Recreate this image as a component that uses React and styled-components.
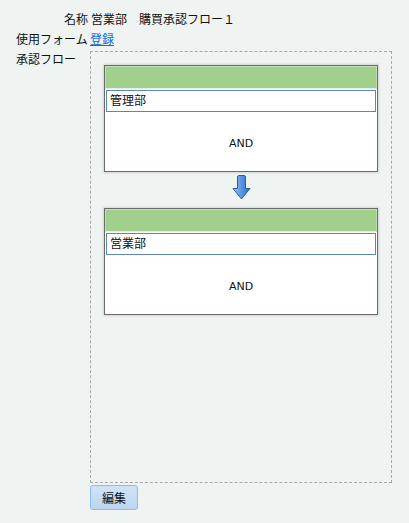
import React from 'react';
import styled, { createGlobalStyle } from 'styled-components';

const GlobalStyle = createGlobalStyle`
    html, body {
        margin: 0;
        padding: 0;
        background-color: #eff4f2;
    }
    body {
        font-family: "Liberation Sans", "Noto Sans CJK JP", sans-serif;
        font-size: 12px;
        color: #111;
    }
`;

const Page = styled.div`
    padding: 10px 0 0 16px;
    width: 409px;
    height: 523px;
    box-sizing: border-box;
`;

const Row = styled.div`
    display: flex;
    align-items: flex-start;
    line-height: 20px;
`;

const Label = styled.div`
    width: 72px;
    flex-shrink: 0;
    text-align: ${props => props.right ? 'right' : 'left'};
    margin-right: ${props => props.right ? '3px' : '2px'};
`;

const Value = styled.div`
    white-space: nowrap;
`;

const Link = styled.a`
    color: #0a6fd6;
    text-decoration: underline;
    cursor: pointer;
`;

const FlowArea = styled.div`
    margin-top: 1px;
    width: 302px;
    height: 432px;
    box-sizing: border-box;
    border: 1px dashed #a8a8a8;
    padding: 13px;
    display: flex;
    flex-direction: column;
    align-items: center;
`;

const Card = styled.div`
    width: 274px;
    flex-shrink: 0;
    box-sizing: border-box;
    border: 1px solid #6a6a6a;
    background-color: #fff;
    box-shadow: 0 0 2px 1px rgba(0, 0, 0, 0.12);
`;

const CardHeader = styled.div`
    height: 23px;
    box-sizing: border-box;
    background-color: #a0d08c;
    border: 1px solid #c2e0b4;
    border-bottom: 1px solid #e8ece8;
`;

const NameBox = styled.div`
    margin: 1px 1px 0;
    height: 22px;
    box-sizing: border-box;
    border: 1px solid #5b87b8;
    padding: 0 3px;
    line-height: 20px;
    overflow: hidden;
`;

const Condition = styled.div`
    height: 59px;
    display: flex;
    align-items: center;
    justify-content: center;
    font-family: "DejaVu Sans", "Liberation Sans", sans-serif;
    font-size: 11px;
    padding-top: 4px;
    box-sizing: border-box;
`;

const ArrowWrap = styled.div`
    margin: 3px 0 8px;
    height: 25px;
    flex-shrink: 0;
    display: flex;
    justify-content: center;
`;

const EditButton = styled.button`
    margin-top: 2px;
    width: 48px;
    height: 25px;
    border: 1px solid #8ebcea;
    border-radius: 3px;
    background: linear-gradient(#cfe3f7, #bcd6f1);
    font-family: "Noto Sans CJK JP", sans-serif;
    font-size: 12px;
    color: #111;
    padding: 0;
    cursor: pointer;
`;

const DownArrow = () => (
    <svg width="19" height="25" viewBox="0 0 19 25">
        <defs>
            <linearGradient id="arrowFill" x1="0" y1="0" x2="1" y2="0">
                <stop offset="0" stopColor="#9cc8f5" />
                <stop offset="0.45" stopColor="#5b9be6" />
                <stop offset="1" stopColor="#2f6fcf" />
            </linearGradient>
        </defs>
        <path
            d="M5.5 2 Q5.5 0.5 7 0.5 L12 0.5 Q13.5 0.5 13.5 2 L13.5 13.5 L18 13.5 L9.5 24 L1 13.5 L5.5 13.5 Z"
            fill="url(#arrowFill)"
            stroke="#2b5d9e"
            strokeWidth="1"
            strokeLinejoin="round"
        />
    </svg>
);

const StepCard = ({ name }) => (
    <Card>
        <CardHeader />
        <NameBox>{name}</NameBox>
        <Condition>AND</Condition>
    </Card>
);

const steps = ['管理部', '営業部'];

const App = () => {
    return (
        <>
            <GlobalStyle />
            <Page>
                <Row>
                    <Label right>名称</Label>
                    <Value>営業部　購買承認フロー１</Value>
                </Row>
                <Row>
                    <Label>使用フォーム</Label>
                    <Value><Link>登録</Link></Value>
                </Row>
                <Row>
                    <Label>承認フロー</Label>
                    <div>
                        <FlowArea>
                            {steps.map((step, i) => (
                                <React.Fragment key={'step-' + step}>
                                    {i > 0 ? <ArrowWrap><DownArrow /></ArrowWrap> : null}
                                    <StepCard name={step} />
                                </React.Fragment>
                            ))}
                        </FlowArea>
                        <EditButton>編集</EditButton>
                    </div>
                </Row>
            </Page>
        </>
    );
}

export default App;
